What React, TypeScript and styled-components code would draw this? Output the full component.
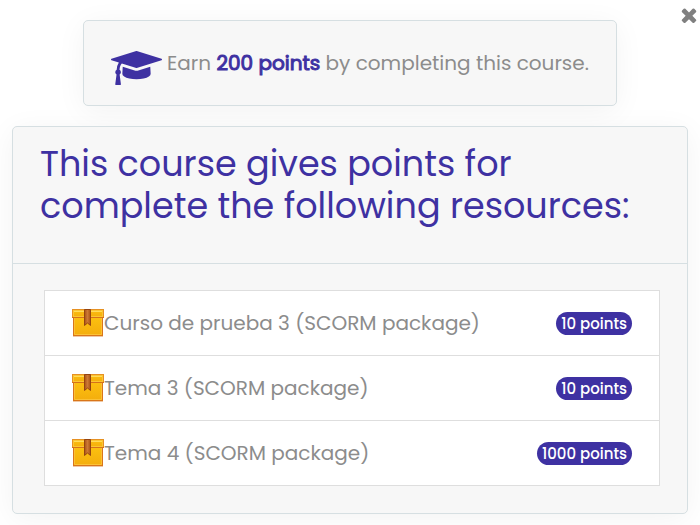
import React from "react";
import styled, { createGlobalStyle } from "styled-components";

const GlobalStyle = createGlobalStyle`
  *, *::before, *::after { box-sizing: border-box; }
  body {
    margin: 0;
    background: #fff;
    color: #8c8c8c;
    font: 400 20px/30px Poppins, Inter, "Open Sans", sans-serif;
  }
`;

const Page = styled.main`
  position: relative;
  display: flex;
  flex-direction: column;
  align-items: center;
  gap: 20px;
  padding: 20px 12px 11px;
`;

const CloseButton = styled.button`
  position: absolute;
  top: 4px;
  right: 0;
  display: flex;
  padding: 0;
  border: 0;
  background: none;
  color: #808080;
  cursor: pointer;
`;

const Card = styled.section`
  background: #f7f7f7;
  border: 1px solid #d6dfe2;
  border-radius: 5px;
  box-shadow: 0 5px 30px rgba(0, 0, 0, 0.05);
`;

const EarnCard = styled(Card)`
  display: flex;
  align-items: center;
  gap: 5px;
  min-height: 86px;
  padding: 20px 27px;
`;

const CapIcon = styled.svg`
  align-self: flex-end;
  fill: #3e31a2;
`;

const EarnText = styled.p`
  margin: 0;
`;

const Points = styled.strong`
  color: #3e31a2;
  font-weight: 400;
  -webkit-text-stroke: 1px currentColor;
`;

const ResourceCard = styled(Card)`
  align-self: stretch;
`;

const CardHeader = styled.header`
  padding: 16px 27px 36px;
  border-bottom: 1px solid #d6dfe2;
`;

const Title = styled.h1`
  margin: 0;
  color: #3e31a2;
  font-size: 35px;
  font-weight: 400;
  line-height: 42px;
`;

const List = styled.ul`
  margin: 26px 27px 27px 31px;
  padding: 0;
  list-style: none;
  background: #fff;
  border: 1px solid #dedede;
  border-bottom: 0;
`;

const Row = styled.li`
  display: flex;
  align-items: center;
  min-height: 65px;
  padding: 0 27px;
  border-bottom: 1px solid #dedede;
`;

const RowName = styled.span`
  flex: 1;
`;

const Badge = styled.span`
  padding: 0 5px;
  border-radius: 12px;
  background: #3e31a2;
  color: #fff;
  font-size: 15px;
  font-weight: 500;
  line-height: 23px;
`;

const GraduationCap = () => (
  <CapIcon width="51" height="34" viewBox="0 128 2304 1536" aria-hidden="true">
    <path d="M1774 836l18 316q4 69-82 128t-235 93.500-323 34.500-323-34.500-235-93.500-82-128l18-316 574 181q22 7 48 7t48-7zM2304 512q0 23-22 31l-1120 352q-4 1-10 1t-10-1l-652-206q-43 34-71 111.500t-34 178.500q63 36 63 109 0 69-58 107l58 433q2 14-8 25-9 11-24 11h-192q-15 0-24-11-10-11-8-25l58-433q-58-38-58-107 0-73 65-111 11-207 98-330l-333-104q-22-8-22-31t22-31l1120-352q4-1 10-1t10 1l1120 352q22 8 22 31z" />
  </CapIcon>
);

const CloseIcon = () => (
  <svg width="22" height="22" viewBox="0 0 1792 1792" fill="currentColor" aria-hidden="true">
    <path d="M1490 1322q0 40-28 68l-136 136q-28 28-68 28t-68-28l-294-294-294 294q-28 28-68 28t-68-28l-136-136q-28-28-28-68t28-68l294-294-294-294q-28-28-28-68t28-68l136-136q28-28 68-28t68 28l294 294 294-294q28-28 68-28t68 28l136 136q28 28 28 68t-28 68l-294 294 294 294q28 28 28 68z" />
  </svg>
);

const PackageIcon = () => (
  <svg width="32" height="32" viewBox="0 0 32 32" aria-hidden="true">
    <defs>
      <linearGradient id="boxFill" x1="0" y1="0" x2="0" y2="1">
        <stop offset="0" stopColor="#fcc00f" />
        <stop offset="1" stopColor="#f4ad0d" />
      </linearGradient>
      <linearGradient id="ribbonFill" x1="0" y1="0" x2="1" y2="0">
        <stop offset="0" stopColor="#a85217" />
        <stop offset="0.5" stopColor="#cd7a35" />
        <stop offset="1" stopColor="#a85217" />
      </linearGradient>
    </defs>
    <rect x="1" y="28" width="30" height="2" fill="#f0c9a5" />
    <rect x="1.500" y="10.500" width="29" height="18" fill="url(#boxFill)" stroke="#d9751a" />
    <path d="M2.500 11v16.500h27V11" fill="none" stroke="#fbc136" />
    <rect x="0.500" y="2.500" width="31" height="8" fill="url(#boxFill)" stroke="#e69123" />
    <path d="M0 10.500h32" stroke="#d57119" />
    <rect x="1.500" y="3.500" width="29" height="6" fill="none" stroke="#fbc534" />
    <path d="M2 4.500h28" stroke="#ffdb5c" />
    <path d="M12.500 2.500h6v16l-3-2.500-3 2.500z" fill="url(#ribbonFill)" stroke="#96440f" />
  </svg>
);

const resources = [
  { name: "Curso de prueba 3 (SCORM package)", points: 10 },
  { name: "Tema 3 (SCORM package)", points: 10 },
  { name: "Tema 4 (SCORM package)", points: 1000 },
];

export default function App() {
  return (
    <>
      <GlobalStyle />
      <Page>
        <CloseButton type="button" aria-label="Close">
          <CloseIcon />
        </CloseButton>
        <EarnCard>
          <GraduationCap />
          <EarnText>
            Earn <Points>200 points</Points> by completing this course.
          </EarnText>
        </EarnCard>
        <ResourceCard>
          <CardHeader>
            <Title>This course gives points for complete the following resources:</Title>
          </CardHeader>
          <List>
            {resources.map(({ name, points }) => (
              <Row key={name}>
                <PackageIcon />
                <RowName>{name}</RowName>
                <Badge>{points} points</Badge>
              </Row>
            ))}
          </List>
        </ResourceCard>
      </Page>
    </>
  );
}
